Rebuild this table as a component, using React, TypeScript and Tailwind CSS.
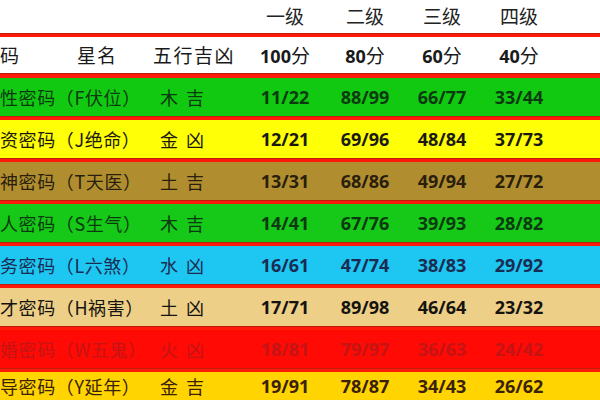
import React from "react";

interface StarRow {
    name: string;
    element: [string, string];
    scores: string[];
    bg: string;
    text: string;
}

const rows: StarRow[] = [
    { name: "性密码（F伏位）", element: ["木", "吉"], scores: ["11/22", "88/99", "66/77", "33/44"], bg: "bg-[#12c912]", text: "text-[#0c3a10]" },
    { name: "资密码（J绝命）", element: ["金", "凶"], scores: ["12/21", "69/96", "48/84", "37/73"], bg: "bg-[#ffff06]", text: "text-[#1c1a10]" },
    { name: "神密码（T天医）", element: ["土", "吉"], scores: ["13/31", "68/86", "49/94", "27/72"], bg: "bg-[#b08e30]", text: "text-[#2a1e0c]" },
    { name: "人密码（S生气）", element: ["木", "吉"], scores: ["14/41", "67/76", "39/93", "28/82"], bg: "bg-[#16c818]", text: "text-[#0c3a10]" },
    { name: "务密码（L六煞）", element: ["水", "凶"], scores: ["16/61", "47/74", "38/83", "29/92"], bg: "bg-[#1ec6f2]", text: "text-[#1b2c52]" },
    { name: "才密码（H祸害）", element: ["土", "凶"], scores: ["17/71", "89/98", "46/64", "23/32"], bg: "bg-[#eecf88]", text: "text-[#161410]" },
    { name: "婚密码（W五鬼）", element: ["火", "凶"], scores: ["18/81", "79/97", "36/63", "24/42"], bg: "bg-[#ff0a04]", text: "text-[#c41414]" },
    { name: "导密码（Y延年）", element: ["金", "吉"], scores: ["19/91", "78/87", "34/43", "26/62"], bg: "bg-[#ffd400]", text: "text-[#3a2208]" },
];

const cols = "grid grid-cols-[150px_95px_80px_80px_74px_80px_1fr] items-center";
const cjk = "font-['Noto_Sans_CJK_SC','Noto_Sans',sans-serif]";
const num = "font-['Open_Sans','Noto_Sans_CJK_SC',sans-serif] font-bold";

function Separator({ thick }: { thick?: boolean }) {
    return (
        <div className={`${thick ? "h-[5px]" : "h-[4px]"} bg-[#ff1a0a] border-t border-[#c01c0c]`} />
    );
}

export default function App() {
    return (
        <div className={`w-[600px] h-[400px] overflow-hidden bg-white ${cjk}`}>
            {/* Level titles */}
            <div className={`${cols} h-[33px] text-[19px] text-[#222]`}>
                <div />
                <div />
                <div className="text-center">一级</div>
                <div className="text-center">二级</div>
                <div className="text-center">三级</div>
                <div className="text-center">四级</div>
            </div>
            <Separator />

            {/* Column headers */}
            <div className={`${cols} h-[36px] text-[19px] text-[#1a1a1a]`}>
                <div className="flex">
                    <span className="w-[77px]">码</span>
                    <span className="tracking-[1px]">星名</span>
                </div>
                <div className="pl-[3px] tracking-[1.5px]">五行吉凶</div>
                {["100", "80", "60", "40"].map((s) => (
                    <div key={s} className="text-center">
                        <span className={`${num} text-[18px]`}>{s}</span>
                        <span>分</span>
                    </div>
                ))}
            </div>
            <Separator thick />

            {/* Star rows; the last one is cut by the picture's bottom edge */}
            {rows.map((r, i) => (
                <div key={r.name}>
                    {i > 0 && <Separator />}
                    <div className={`${cols} ${i === rows.length - 1 ? "h-[28px]" : "h-[38px]"} ${r.bg} ${r.text}`}>
                        <div className="text-[18px] tracking-[0.6px] whitespace-nowrap">{r.name}</div>
                        <div className="pl-[10px] text-[18px] flex gap-[8px]">
                            <span>{r.element[0]}</span>
                            <span>{r.element[1]}</span>
                        </div>
                        {r.scores.map((s) => (
                            <div key={s} className={`${num} text-[18px] text-center`}>{s}</div>
                        ))}
                    </div>
                </div>
            ))}
        </div>
    );
}
